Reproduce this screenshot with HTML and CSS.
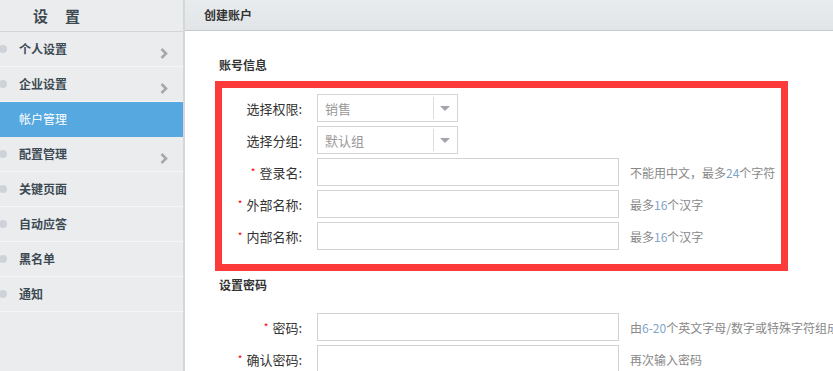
FILE: index.html
```html
<!DOCTYPE html>
<html lang="zh-CN">
<head>
  <meta charset="UTF-8">
  <meta name="viewport" content="width=device-width, initial-scale=1.0">
  <title>创建账户</title>
  <link rel="stylesheet" href="styles.css">
</head>
<body>

  <div class="page">
    <aside class="sidebar">
      <div class="side-title"><span>设</span><span>置</span></div>
      <ul class="menu">
        <li class="menu-item">个人设置
          <svg class="chev" viewBox="0 0 8 11"><polyline points="1.5,1 6,5.5 1.5,10"/></svg>
        </li>
        <li class="menu-item">企业设置
          <svg class="chev" viewBox="0 0 8 11"><polyline points="1.5,1 6,5.5 1.5,10"/></svg>
        </li>
        <li class="menu-item active">帐户管理</li>
        <li class="menu-item">配置管理
          <svg class="chev" viewBox="0 0 8 11"><polyline points="1.5,1 6,5.5 1.5,10"/></svg>
        </li>
        <li class="menu-item">关键页面</li>
        <li class="menu-item">自动应答</li>
        <li class="menu-item">黑名单</li>
        <li class="menu-item">通知</li>
      </ul>
    </aside>

    <main class="main">
      <div class="main-head">创建账户</div>
      <div class="main-body">
        <h3 class="sec-title">账号信息</h3>
        <div class="form-box">
          <div class="row">
            <label class="lbl">选择权限:</label>
            <div class="select"><span class="sel-text">销售</span><span class="sel-arrow"></span></div>
          </div>
          <div class="row">
            <label class="lbl">选择分组:</label>
            <div class="select"><span class="sel-text">默认组</span><span class="sel-arrow"></span></div>
          </div>
          <div class="row">
            <label class="lbl"><i class="req">*</i>登录名:</label>
            <input type="text" class="txt">
            <span class="tip">不能用中文，最多<em>24</em>个字符</span>
          </div>
          <div class="row">
            <label class="lbl"><i class="req">*</i>外部名称:</label>
            <input type="text" class="txt">
            <span class="tip">最多<em>16</em>个汉字</span>
          </div>
          <div class="row">
            <label class="lbl"><i class="req">*</i>内部名称:</label>
            <input type="text" class="txt">
            <span class="tip">最多<em>16</em>个汉字</span>
          </div>
        </div>

        <h3 class="sec-title">设置密码</h3>
        <div class="form-plain">
          <div class="row">
            <label class="lbl"><i class="req">*</i>密码:</label>
            <input type="password" class="txt">
            <span class="tip">由<em>6-20</em>个英文字母/数字或特殊字符组成</span>
          </div>
          <div class="row">
            <label class="lbl"><i class="req">*</i>确认密码:</label>
            <input type="password" class="txt">
            <span class="tip">再次输入密码</span>
          </div>
        </div>
      </div>
    </main>
  </div>

</body>
</html>
```

FILE: styles.css
```css
body {
  margin: 0;
  padding: 0;
  font-family: "Noto Sans CJK SC", "Liberation Sans", sans-serif;
  font-size: 12px;
  color: #333;
  background-color: #fff;
  overflow: hidden;
}
.page {
  display: flex;
  height: 100vh;
}
.sidebar {
  flex: none;
  width: 183px;
  background-color: #ebecee;
  border-right: 2px solid #d6d7d9;
}
.side-title {
  height: 31px;
  border-bottom: 1px solid #d3d5d8;
  display: flex;
  align-items: center;
  gap: 17px;
  padding-left: 33px;
  font-size: 15px;
  font-weight: bold;
  color: #3e4a52;
}
.menu {
  list-style: none;
  margin: 0;
  padding: 0;
}
.menu-item {
  position: relative;
  height: 34px;
  line-height: 34px;
  border-bottom: 1px solid #f5f6f7;
  padding-left: 19px;
  font-weight: bold;
  color: #3c4a53;
}
.menu-item::before {
  content: "";
  position: absolute;
  left: -1px;
  top: 13px;
  width: 8px;
  height: 8px;
  border-radius: 50%;
  background-color: #cdd3d8;
}
.menu-item.active {
  background-color: #56a8e0;
  color: #fff;
  font-weight: normal;
  border-bottom-color: #56a8e0;
}
.menu-item.active::before {
  display: none;
}
.chev {
  position: absolute;
  left: 160px;
  top: 16px;
  width: 8px;
  height: 11px;
}
.chev polyline {
  fill: none;
  stroke: #a8a8a8;
  stroke-width: 2.6;
}
.main {
  flex: 1;
  min-width: 0;
}
.main-head {
  height: 30px;
  line-height: 30px;
  padding-left: 19px;
  background: linear-gradient(#e9ecef, #e1e5e8);
  border-bottom: 1px solid #c6cacd;
  font-weight: bold;
  color: #333;
}
.main-body {
  padding: 24px 0 0 30px;
}
.sec-title {
  margin: 0;
  height: 20px;
  line-height: 20px;
  padding-left: 4px;
  font-size: 12px;
  font-weight: bold;
  color: #333;
}
.form-box {
  width: 559px;
  margin-top: 6px;
  margin-bottom: 4px;
  padding: 6px 0 10px;
  border: 7px solid #fd3a3a;
}
.form-plain {
  padding-left: 7px;
  margin-top: 18px;
}
.row {
  display: flex;
  align-items: center;
  height: 28px;
  margin-bottom: 4px;
  white-space: nowrap;
}
.lbl {
  flex: none;
  width: 80px;
  margin-right: 15px;
  text-align: right;
  font-size: 13px;
  color: #333;
}
.req {
  font-style: normal;
  color: #f00;
  font-size: 10px;
  margin-right: 4px;
  vertical-align: 2px;
}
.select {
  flex: none;
  box-sizing: border-box;
  width: 141px;
  height: 28px;
  border: 1px solid #d4d4d4;
  display: flex;
  align-items: center;
}
.sel-text {
  flex: 1;
  padding-left: 7px;
  color: #999;
  font-size: 13px;
}
.sel-arrow {
  position: relative;
  width: 23px;
  height: 22px;
  border-left: 1px solid #dedede;
}
.sel-arrow::after {
  content: "";
  position: absolute;
  left: 6px;
  top: 9px;
  border-left: 5px solid transparent;
  border-right: 5px solid transparent;
  border-top: 5px solid #a2a6aa;
}
.txt {
  flex: none;
  box-sizing: border-box;
  width: 302px;
  height: 28px;
  margin: 0;
  border: 1px solid #d3d3d3;
  padding: 0 6px;
  outline: none;
}
.tip {
  margin-left: 11px;
  color: #888;
  font-size: 12px;
}
.tip em {
  font-style: normal;
  color: #7fa6c9;
}
```
